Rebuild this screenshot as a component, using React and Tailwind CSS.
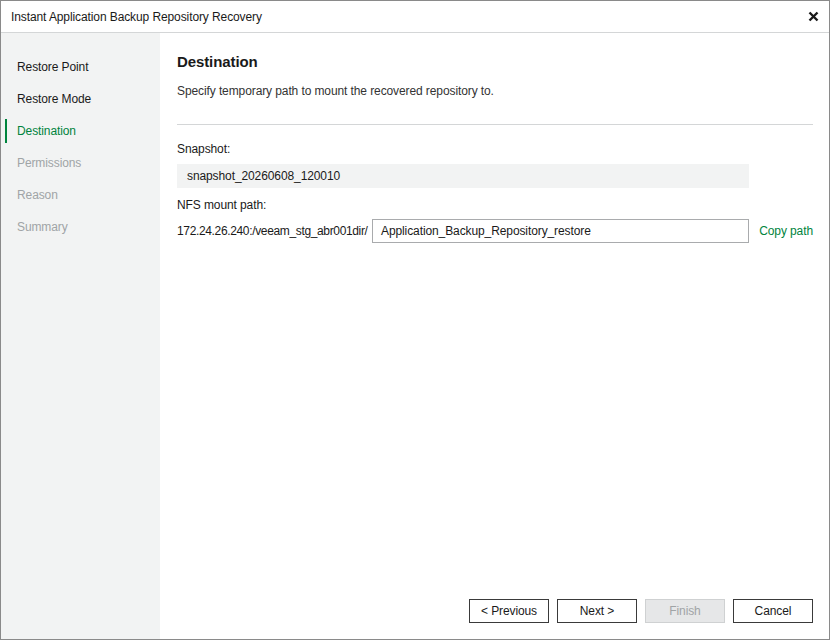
import React from 'react';

const steps = [
  { label: 'Restore Point', state: 'done' },
  { label: 'Restore Mode', state: 'done' },
  { label: 'Destination', state: 'active' },
  { label: 'Permissions', state: 'todo' },
  { label: 'Reason', state: 'todo' },
  { label: 'Summary', state: 'todo' },
];

function StepItem({ label, state }) {
  const color =
    state === 'active' ? 'text-[#00843d]' : state === 'done' ? 'text-[#1a1a1a]' : 'text-[#a0a4a6]';
  return (
    <div className="relative flex h-[32px] items-center pl-[16px]">
      {state === 'active' && <div className="absolute left-[4px] top-[4px] h-[24px] w-[2px] bg-[#00843d]" />}
      <span className={color}>{label}</span>
    </div>
  );
}

function Button({ children, disabled }) {
  return (
    <button
      className={
        'h-[24px] w-[80px] border text-[12px] ' +
        (disabled ? 'border-[#cfd1d2] bg-[#e6e7e8] text-[#a0a4a6]' : 'border-[#3a3a3a] bg-white text-[#1a1a1a]')
      }
    >
      {children}
    </button>
  );
}

export default function App() {
  return (
    <div className="flex h-[640px] w-[830px] flex-col border border-[#8a8a8a] bg-white font-['Liberation_Sans',sans-serif] text-[12px] leading-[16px] tracking-[-0.1px] text-[#1a1a1a]">
      <div className="flex h-[32px] shrink-0 items-center justify-between border-b border-[#d4d6d7] pl-[10px] pr-[10px]">
        <span>Instant Application Backup Repository Recovery</span>
        <svg width="11" height="11" viewBox="0 0 11 11">
          <path d="M1.5 1.5 L9.5 9.5 M9.5 1.5 L1.5 9.5" stroke="#1a1a1a" strokeWidth="2.4" />
        </svg>
      </div>
      <div className="flex flex-1">
        <div className="w-[159px] bg-[#f2f3f3] pt-[18px]">
          {steps.map((s) => (
            <StepItem key={s.label} {...s} />
          ))}
        </div>
        <div className="flex flex-1 flex-col pl-[17px] pr-[16px]">
          <div className="mt-[19px] text-[15px] font-bold leading-[20px]">Destination</div>
          <div className="mt-[11px] text-[#333]">Specify temporary path to mount the recovered repository to.</div>
          <div className="mt-[25px] h-px bg-[#d4d6d7]" />
          <div className="mt-[16px]">Snapshot:</div>
          <div className="mt-[7px] flex h-[24px] w-[572px] items-center bg-[#f2f3f3] pl-[10px]">
            snapshot_20260608_120010
          </div>
          <div className="mt-[9px]">NFS mount path:</div>
          <div className="mt-[6px] flex items-center">
            <span className="w-[195px] whitespace-nowrap tracking-[-0.35px]">172.24.26.240:/veeam_stg_abr001dir/</span>
            <div className="flex h-[24px] w-[377px] items-center border border-[#a9abad] pl-[8px]">
              Application_Backup_Repository_restore
            </div>
            <span className="ml-auto text-[#00843d]">Copy path</span>
          </div>
          <div className="mt-auto mb-[16px] flex justify-end gap-[8px]">
            <Button>&lt; Previous</Button>
            <Button>Next &gt;</Button>
            <Button disabled>Finish</Button>
            <Button>Cancel</Button>
          </div>
        </div>
      </div>
    </div>
  );
}
